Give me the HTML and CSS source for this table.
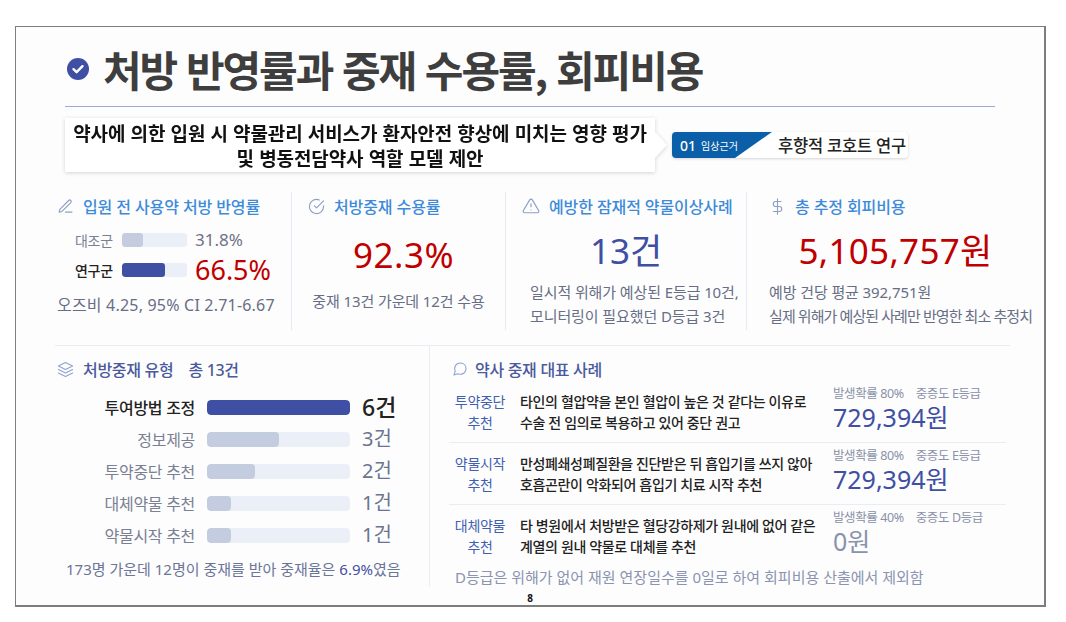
FILE: index.html
```html
<!DOCTYPE html>
<html lang="ko">
<head>
<meta charset="utf-8">
<title>처방 반영률과 중재 수용률, 회피비용</title>
<link rel="stylesheet" href="styles.css">
</head>
<body>
<div class="slide">
  <header class="title-row">
    <svg class="title-icon" viewBox="0 0 22 22" width="22" height="22"><circle cx="11" cy="11" r="11" fill="#3f4fa3"/><polyline points="6.5,11.2 9.6,14.2 15.5,8.2" fill="none" stroke="#fff" stroke-width="2.4" stroke-linecap="round" stroke-linejoin="round"/></svg>
    <h1 class="title">처방 반영률과 중재 수용률, 회피비용</h1>
  </header>
  <div class="rule"></div>

  <div class="intro">
    <div class="callout">
      <div>약사에 의한 입원 시 약물관리 서비스가 환자안전 향상에 미치는 영향 평가</div>
      <div>및 병동전담약사 역할 모델 제안</div>
    </div>
    <div class="tag">
      <div class="tag-blue"><span class="tag-num">01</span><span class="tag-kind">임상근거</span></div>
      <span class="tag-text">후향적 코호트 연구</span>
    </div>
  </div>

  <section class="stats">
    <div class="stat">
      <div class="stat-head">
        <svg viewBox="0 0 24 24" width="17" height="17" class="ico"><path d="M12 20h9"/><path d="M16.5 3.5a2.12 2.12 0 0 1 3 3L7 19l-4 1 1-4L16.5 3.5z"/></svg>
        <span>입원 전 사용약 처방 반영률</span>
      </div>
      <div class="compare">
        <div class="cmp-row">
          <span class="cmp-label">대조군</span>
          <div class="bar"><div class="fill fill-light" style="width:31.8%"></div></div>
          <span class="cmp-val">31.8%</span>
        </div>
        <div class="cmp-row">
          <span class="cmp-label strong">연구군</span>
          <div class="bar"><div class="fill fill-dark" style="width:66.5%"></div></div>
          <span class="cmp-val red">66.5%</span>
        </div>
      </div>
      <div class="odds">오즈비 4.25, 95% CI 2.71-6.67</div>
    </div>

    <div class="stat">
      <div class="stat-head">
        <svg viewBox="0 0 24 24" width="17" height="17" class="ico"><path d="M22 11.08V12a10 10 0 1 1-5.93-9.14"/><polyline points="22 4 12 14.01 9 11.01"/></svg>
        <span>처방중재 수용률</span>
      </div>
      <div class="big red big-accept">92.3%</div>
      <div class="sub center">중재 13건 가운데 12건 수용</div>
    </div>

    <div class="stat">
      <div class="stat-head">
        <svg viewBox="0 0 24 24" width="18" height="18" class="ico"><path d="M10.29 3.86L1.82 18a2 2 0 0 0 1.71 3h16.94a2 2 0 0 0 1.71-3L13.71 3.86a2 2 0 0 0-3.42 0z"/><line x1="12" y1="9" x2="12" y2="13"/><line x1="12" y1="17" x2="12.01" y2="17"/></svg>
        <span>예방한 잠재적 약물이상사례</span>
      </div>
      <div class="big indigo big-cases">13건</div>
      <div class="sub sub-cases">일시적 위해가 예상된 E등급 10건,<br>모니터링이 필요했던 D등급 3건</div>
    </div>

    <div class="stat stat-cost">
      <div class="stat-head">
        <svg viewBox="0 0 24 24" width="17" height="17" class="ico"><line x1="12" y1="1" x2="12" y2="23"/><path d="M17 5H9.5a3.5 3.5 0 0 0 0 7h5a3.5 3.5 0 0 1 0 7H6"/></svg>
        <span>총 추정 회피비용</span>
      </div>
      <div class="big red big-cost">5,105,757원</div>
      <div class="sub sub-cost">예방 건당 평균 392,751원<br><span class="tight">실제 위해가 예상된 사례만 반영한 최소 추정치</span></div>
    </div>
  </section>

  <div class="hr"></div>

  <section class="bottom">
    <div class="types">
      <div class="sec-head">
        <svg viewBox="0 0 24 24" width="17" height="17" class="ico ico-b"><polygon points="12 2 2 7 12 12 22 7 12 2"/><polyline points="2 17 12 22 22 17"/><polyline points="2 12 12 17 22 12"/></svg>
        <span>처방중재 유형</span><span class="total">총 13건</span>
      </div>
      <div class="type-list">
        <div class="type-row top">
          <span class="type-label">투여방법 조정</span>
          <div class="type-bar"><div class="fill fill-dark" style="width:100%"></div></div>
          <span class="type-val">6건</span>
        </div>
        <div class="type-row">
          <span class="type-label">정보제공</span>
          <div class="type-bar"><div class="fill fill-light" style="width:50%"></div></div>
          <span class="type-val">3건</span>
        </div>
        <div class="type-row">
          <span class="type-label">투약중단 추천</span>
          <div class="type-bar"><div class="fill fill-light" style="width:33.3%"></div></div>
          <span class="type-val">2건</span>
        </div>
        <div class="type-row">
          <span class="type-label">대체약물 추천</span>
          <div class="type-bar"><div class="fill fill-light" style="width:16.7%"></div></div>
          <span class="type-val">1건</span>
        </div>
        <div class="type-row">
          <span class="type-label">약물시작 추천</span>
          <div class="type-bar"><div class="fill fill-light" style="width:16.7%"></div></div>
          <span class="type-val">1건</span>
        </div>
      </div>
      <div class="types-note">173명 가운데 12명이 중재를 받아 중재율은 <span class="indigo">6.9%</span>였음</div>
    </div>

    <div class="cases">
      <div class="sec-head cases-head">
        <svg viewBox="0 0 24 24" width="16" height="16" class="ico ico-b"><path d="M21 11.5a8.38 8.38 0 0 1-.9 3.8 8.5 8.5 0 0 1-7.6 4.7 8.38 8.38 0 0 1-3.8-.9L3 21l1.9-5.7a8.38 8.38 0 0 1-.9-3.8 8.5 8.5 0 0 1 4.7-7.6 8.38 8.38 0 0 1 3.8-.9h.5a8.48 8.48 0 0 1 8 8v.5z"/></svg>
        <span>약사 중재 대표 사례</span>
      </div>
      <div class="case">
        <div class="case-tag">투약중단<br>추천</div>
        <div class="case-desc">타인의 혈압약을 본인 혈압이 높은 것 같다는 이유로<br>수술 전 임의로 복용하고 있어 중단 권고</div>
        <div class="case-cost">
          <div class="case-meta">발생확률 80%<span class="gap"></span>중증도 E등급</div>
          <div class="case-val">729,394원</div>
        </div>
      </div>
      <div class="case">
        <div class="case-tag">약물시작<br>추천</div>
        <div class="case-desc">만성폐쇄성폐질환을 진단받은 뒤 흡입기를 쓰지 않아<br>호흡곤란이 악화되어 흡입기 치료 시작 추천</div>
        <div class="case-cost">
          <div class="case-meta">발생확률 80%<span class="gap"></span>중증도 E등급</div>
          <div class="case-val">729,394원</div>
        </div>
      </div>
      <div class="case last">
        <div class="case-tag">대체약물<br>추천</div>
        <div class="case-desc">타 병원에서 처방받은 혈당강하제가 원내에 없어 같은<br>계열의 원내 약물로 대체를 추천</div>
        <div class="case-cost">
          <div class="case-meta">발생확률 40%<span class="gap"></span>중증도 D등급</div>
          <div class="case-val zero">0원</div>
        </div>
      </div>
      <div class="cases-note">D등급은 위해가 없어 재원 연장일수를 0일로 하여 회피비용 산출에서 제외함</div>
    </div>
  </section>

  <div class="page-no">8</div>
</div>
</body>
</html>
```

FILE: styles.css
```css
* { box-sizing: border-box; margin: 0; padding: 0; }

body {
  margin: 0;
  background: #ffffff;
  font-family: "Noto Sans", "Noto Sans CJK KR", sans-serif;
  color: #222;
}

.slide {
  margin: 26px 0 0 15px;
  width: 1031px;
  height: 581px;
  border: 1px solid #7d7d7d;
  border-right-width: 2px;
  border-bottom-width: 2px;
  background: #fdfdfd;
  display: flex;
  flex-direction: column;
  overflow: hidden;
}

/* title */
.title-row {
  display: flex;
  align-items: center;
  gap: 14px;
  height: 56px;
  margin-top: 14px;
  padding-left: 51px;
}
.title-icon { flex: none; }
.title {
  font-family: "Noto Sans CJK KR", sans-serif;
  font-size: 42px;
  font-weight: 700;
  color: #3e3e3e;
  letter-spacing: -2.05px;
  line-height: 56px;
}
.rule {
  margin: 9px 0 0 49px;
  width: 930px;
  height: 1px;
  background: #9ba8d6;
}

/* intro */
.intro {
  display: flex;
  align-items: center;
  margin: 11px 0 0 49px;
}
.callout {
  position: relative;
  width: 590px;
  height: 54px;
  background: #fff;
  filter: drop-shadow(0 1px 2px rgba(0, 0, 0, 0.16));
  display: flex;
  flex-direction: column;
  justify-content: center;
  align-items: center;
  font-family: "Noto Sans CJK KR", sans-serif;
  font-size: 19px;
  font-weight: 700;
  line-height: 25px;
  color: #111;
  letter-spacing: -0.1px;
  white-space: nowrap;
}
.callout::after {
  content: "";
  position: absolute;
  right: -12px;
  top: 14px;
  width: 12px;
  height: 26px;
  background: #fff;
  clip-path: polygon(0 0, 100% 50%, 0 100%);
}
.tag {
  display: flex;
  align-items: center;
  margin-left: 17px;
  width: 236px;
  height: 26px;
  background: #fff;
  border-radius: 4px;
  box-shadow: 0 1px 3px rgba(0, 0, 0, 0.16);
  overflow: hidden;
}
.tag-blue {
  display: flex;
  align-items: center;
  gap: 5px;
  width: 100px;
  height: 100%;
  padding-left: 8px;
  background: #0b5ea8;
  color: #fff;
  clip-path: polygon(0 0, 100% 0, 63% 100%, 0 100%);
}
.tag-num { font-size: 14px; font-weight: 500; }
.tag-kind { font-size: 10px; font-family: "Noto Sans CJK KR", sans-serif; }
.tag-text {
  margin-left: 6px;
  font-size: 16.5px;
  font-weight: 500;
  color: #222;
  letter-spacing: -0.2px;
}

/* stats */
.stats {
  display: grid;
  grid-template-columns: 250px 214px 241px 284px;
  margin: 20px 0 0 25px;
  height: 138px;
}
.stat {
  padding: 0 16px;
  border-left: 1px solid #e6eaf2;
}
.stat:first-child { border-left: none; }
.stat-head {
  display: flex;
  align-items: center;
  gap: 9px;
  height: 28px;
  font-size: 16px;
  font-weight: 500;
  color: #3d8bd9;
  letter-spacing: -0.1px;
  white-space: nowrap;
}
.ico {
  flex: none;
  fill: none;
  stroke: #8ea0c6;
  stroke-width: 1.6;
  stroke-linecap: round;
  stroke-linejoin: round;
}
.ico-b { stroke: #8fa5cf; }

.compare {
  margin-top: 6px;
  display: flex;
  flex-direction: column;
  gap: 2px;
}
.cmp-row {
  display: grid;
  grid-template-columns: 37px 65px auto;
  column-gap: 10px;
  align-items: center;
  height: 28px;
  padding-left: 18px;
}
.cmp-row .cmp-val { margin-left: -2px; }
.cmp-label {
  font-size: 14px;
  color: #7a8094;
  letter-spacing: -0.3px;
  white-space: nowrap;
}
.cmp-label.strong { color: #222; font-weight: 500; }
.bar {
  height: 14px;
  border-radius: 3px;
  background: #ebeff8;
  overflow: hidden;
}
.fill { height: 100%; border-radius: 3px; }
.fill-light { background: #c4ccdf; }
.fill-dark { background: #3f4fa3; }
.cmp-val {
  font-size: 17px;
  color: #6b7287;
  line-height: 28px;
}
.cmp-val.red { font-size: 27px; color: #c00000; }
.red { color: #c00000; }
.indigo { color: #3f4fa3; }
.odds {
  margin-top: 10px;
  font-size: 16px;
  line-height: 22px;
  color: #676e85;
  letter-spacing: 0.2px;
  white-space: nowrap;
}

.big {
  font-size: 35px;
  line-height: 44px;
  text-align: center;
  white-space: nowrap;
}
.big-accept { margin-top: 13px; padding-left: 10px; letter-spacing: 0.5px; }
.big-cases { margin-top: 9px; }
.big-cost { margin-top: 9px; letter-spacing: 0.3px; }
.sub {
  font-size: 15px;
  line-height: 24px;
  color: #676e85;
  white-space: nowrap;
  letter-spacing: -0.1px;
}
.sub.center { margin-top: 12px; text-align: center; }
.sub-cases { margin-top: 7px; padding-left: 8px; }
.stat-cost { padding-left: 22px; padding-right: 8px; }
.sub-cost { margin-top: 7px; }
.sub-cost .tight { letter-spacing: -0.9px; }

.hr {
  margin: 15px 0 0 39px;
  width: 955px;
  height: 1px;
  background: #e8ecf4;
}

/* bottom */
.bottom {
  display: flex;
  margin-left: 39px;
}
.types {
  width: 374px;
  padding-left: 2px;
}
.sec-head {
  display: flex;
  align-items: center;
  gap: 9px;
  height: 24px;
  margin-top: 11px;
  font-size: 16px;
  font-weight: 500;
  color: #4a5a9c;
  letter-spacing: -0.3px;
}
.sec-head .total { margin-left: 6px; }
.type-list {
  margin-top: 10px;
}
.type-row {
  display: grid;
  grid-template-columns: 138px 143px auto;
  column-gap: 12px;
  align-items: center;
  height: 32px;
}
.type-label {
  text-align: right;
  font-size: 16px;
  color: #7a8094;
  letter-spacing: -0.3px;
  white-space: nowrap;
}
.type-bar {
  height: 15px;
  border-radius: 4px;
  background: #ebeff8;
  overflow: hidden;
}
.type-bar .fill { border-radius: 4px; }
.type-val {
  font-size: 20px;
  color: #6b7490;
  line-height: 32px;
}
.type-row.top .type-label { color: #222; font-weight: 500; }
.type-row.top .type-val { font-size: 23px; color: #222; font-weight: 500; }
.types-note {
  margin-top: 8px;
  padding-left: 9px;
  font-size: 15px;
  line-height: 20px;
  color: #6b7599;
  letter-spacing: 0px;
  white-space: nowrap;
}

.cases {
  width: 581px;
  border-left: 1px solid #e8ecf4;
  padding-left: 19px;
  padding-right: 4px;
}
.cases-head { padding-left: 3px; gap: 7px; }
.case {
  display: grid;
  grid-template-columns: 62px 304px 1fr;
  column-gap: 9px;
  align-items: center;
  height: 62px;
  border-bottom: 1px solid #e8ecf4;
}
.case.last { border-bottom: none; }
.case-tag {
  text-align: center;
  font-size: 14px;
  line-height: 21px;
  color: #3f5fb0;
  letter-spacing: -0.3px;
}
.case-desc {
  font-size: 14px;
  line-height: 21px;
  font-weight: 500;
  color: #222;
  letter-spacing: -0.35px;
  white-space: nowrap;
}
.case-cost { margin-top: -6px; }
.case-meta {
  font-size: 12.5px;
  line-height: 16px;
  color: #8a91a8;
  letter-spacing: -0.4px;
  white-space: nowrap;
}
.case-meta .gap { display: inline-block; width: 12px; }
.case-val {
  font-size: 25px;
  line-height: 30px;
  color: #3f4fa3;
  white-space: nowrap;
}
.case-val.zero { color: #8a93ad; }
.cases-note {
  padding-left: 6px;
  font-size: 15px;
  line-height: 20px;
  color: #8a93b0;
  letter-spacing: 0px;
  white-space: nowrap;
}

.page-no {
  margin-top: 4px;
  text-align: center;
  font-size: 10px;
  font-weight: 700;
  line-height: 14px;
  color: #111;
}
```
